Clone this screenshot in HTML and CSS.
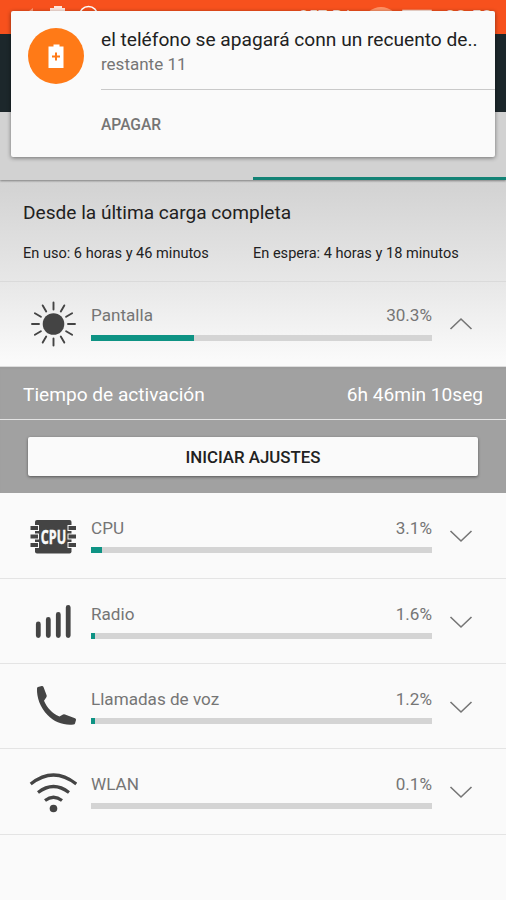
FILE: index.html
```
<!DOCTYPE html>
<html lang="es">
<head>
<meta charset="utf-8">
<title>Batería</title>
<link rel="stylesheet" href="styles.css">
</head>
<body>
<div class="screen">
  <div class="status">
    <svg class="status-icons" width="100" height="34" viewBox="0 0 100 34"><path d="M29 11l4-3v3z" fill="#ff9c78"/><path d="M50 8h4V6h8v2h3v16H50z" fill="#fff" opacity=".85"/><circle cx="88.500" cy="15.500" r="9" fill="none" stroke="#fff" stroke-width="1.500"/></svg>
    <span class="speed">257 B/s</span>
    <svg class="signal" width="64" height="34" viewBox="0 0 64 34"><path d="M0 12Q13 2 26 12L13 27z" fill="#ff9468"/><path d="M35 10.500h28v14H35z" fill="none" stroke="#ffe5db" stroke-width="1.500"/></svg>
    <span class="clock">03:53</span>
  </div>
  <div class="appbar"></div>
  <div class="tabs"><span class="tab"></span><span class="tab active"></span></div>
  <section class="summary">
    <h1><span>Desde la última carga completa</span></h1>
    <div class="times"><span>En uso: 6 horas y 46 minutos</span><span>En espera: 4 horas y 18 minutos</span></div>
  </section>
  <div class="row first">
    <svg class="icon" width="48" height="48" viewBox="0 0 48 48"><circle cx="24.500" cy="24" r="10.800" fill="#444"/><g transform="translate(.5 0)" stroke="#444" stroke-width="1.900" stroke-linecap="round"><path d="M24 2.500v7M24 38.500v7M2.500 24h7M38.500 24h7M13.200 5.400l3.500 6M31.300 36.600l3.500 6M5.400 13.200l6 3.500M36.600 31.300l6 3.500M5.400 34.800l6-3.500M36.600 16.700l6-3.500M13.200 42.600l3.500-6M31.300 11.400l3.500-6"/></g></svg>
    <div class="usage"><div class="label"><span>Pantalla</span><span>30.3%</span></div><div class="bar"><i style="width:30.100%"></i></div></div>
    <svg class="chev" width="24" height="14" viewBox="0 0 24 14"><path d="M1.500 12L12 2l10.500 10"/></svg>
  </div>
  <section class="details">
    <div class="activation"><span>Tiempo de activación</span><span>6h 46min 10seg</span></div>
    <div class="action"><button>INICIAR AJUSTES</button></div>
  </section>
  <div class="row">
    <svg class="icon" width="48" height="48" viewBox="0 0 48 48"><rect x="6" y="7" width="36.500" height="33.500" rx="2" fill="#444"/><path d="M5 15h5M5 23.500h5M5 32h5M38.500 15h5M38.500 23.500h5M38.500 32h5" stroke="#fafafa" stroke-width="6"/><path d="M1.500 15h7.500M1.500 23.500h7.500M1.500 32h7.500M39.500 15h7.500M39.500 23.500h7.500M39.500 32h7.500" stroke="#444" stroke-width="3.800"/><text class="cpu" transform="translate(24.500 30.500) scale(.66 1)" text-anchor="middle">CPU</text></svg>
    <div class="usage"><div class="label"><span>CPU</span><span>3.1%</span></div><div class="bar"><i style="width:3.100%"></i></div></div>
    <svg class="chev" width="24" height="14" viewBox="0 0 24 14"><path d="M1.500 2L12 12 22.500 2"/></svg>
  </div>
  <div class="row">
    <svg class="icon" width="48" height="48" viewBox="0 0 48 48"><path d="M9.300 25v11.500M19.300 20.500v16M29.300 15.500v21M39.200 8.500v28" fill="none" stroke="#444" stroke-width="4.800" stroke-linecap="round"/></svg>
    <div class="usage"><div class="label"><span>Radio</span><span>1.6%</span></div><div class="bar"><i style="width:1.200%"></i></div></div>
    <svg class="chev" width="24" height="14" viewBox="0 0 24 14"><path d="M1.500 2L12 12 22.500 2"/></svg>
  </div>
  <div class="row">
    <svg class="icon" width="48" height="48" viewBox="0 0 48 48"><path d="M9 3L12.700 2q1.300-.2 1.800 1l3.200 8.500q.2 1-.5 2l-2.200 3.200C18 23.500 23 29.500 30.500 32.500l3.500-2q1-.3 2 0L46 34.200q1.300.6 1 1.800l-1 3.500q-.3 1-1.500 1C35 41.500 25.500 38.500 18.500 31 11 23 7.700 13.500 8 4.500q0-1.200 1-1.500z" fill="#444"/></svg>
    <div class="usage"><div class="label"><span>Llamadas de voz</span><span>1.2%</span></div><div class="bar"><i style="width:1.200%"></i></div></div>
    <svg class="chev" width="24" height="14" viewBox="0 0 24 14"><path d="M1.500 2L12 12 22.500 2"/></svg>
  </div>
  <div class="row">
    <svg class="icon" width="48" height="48" viewBox="0 0 48 48"><path d="M1.700 15Q24.500-3 47.300 15M9 23.500Q24.500 11.500 40 23.500M16 31.500q8.500-6.500 17 0" fill="none" stroke="#444" stroke-width="3.200"/><circle cx="24.500" cy="39.500" r="3.800" fill="#444"/></svg>
    <div class="usage"><div class="label"><span>WLAN</span><span>0.1%</span></div><div class="bar"></div></div>
    <svg class="chev" width="24" height="14" viewBox="0 0 24 14"><path d="M1.500 2L12 12 22.500 2"/></svg>
  </div>
  <aside class="notice">
    <svg width="56" height="56" viewBox="0 0 56 56"><circle cx="28" cy="28" r="28" fill="#ff7a17"/><path d="M20.500 18.500h5v-2h6v2h4V40h-15z" fill="#fff"/><path d="M28 24.500v8M24 28.500h8" stroke="#ff7a17" stroke-width="2"/></svg>
    <div class="notice-body">
      <div class="notice-text"><strong>el teléfono se apagará conn un recuento de..</strong><span>restante 11</span></div>
      <div class="shutdown">APAGAR</div>
    </div>
  </aside>
</div>
</body>
</html>
```
FILE: styles.css
```
* { box-sizing: border-box; }
body { margin: 0; font-family: Roboto, sans-serif; background: #fafafa; }
.screen { position: relative; width: 506px; height: 900px; overflow: hidden; background: linear-gradient(#d0d0d0 112px, #d4d4d4 190px, #e7e7e7 281px, #fafafa 360px, #fafafa); }
.status { height: 34px; background: #f7511d; display: flex; color: #ffe5db; }
.speed { margin-left: 199px; width: 69px; font-size: 17px; line-height: 32px; white-space: nowrap; }
.clock { margin-left: 13px; font-size: 19px; line-height: 33px; }
.appbar { height: 78px; background: #1c272b; }
.tabs { height: 68px; display: flex; box-shadow: 0 1px 2px #0006; background: #d2d2d2; }
.tab { width: 50%; }
.active { border-bottom: 3px solid #148376; }
.summary { height: 101px; padding: 21px 23px 0; color: #212121; }
h1 { margin: 0; font-size: 19.100px; font-weight: 400; line-height: 24px; }
.times { display: flex; margin-top: 19px; font-size: 14.550px; line-height: 20px; white-space: nowrap; }
.times span { width: 230px; flex: none; }
.row { height: 85.400px; display: flex; align-items: flex-start; border-bottom: 1px solid #e4e4e4; }
.first { height: 86px; border-top: 1px solid #dadada; border-bottom: 1px solid #ddd; }
.icon { margin: 20px 0 0 29px; flex: none; }
.first .icon { margin-top: 18px; }
.usage { width: 341px; margin: 25px 0 0 14px; }
.first .usage { margin-top: 23px; }
.first .bar { margin-top: 10px; }
.label { display: flex; justify-content: space-between; font-size: 17.100px; line-height: 20px; color: #757575; }
.bar { height: 6px; margin-top: 9px; background: #d4d4d4; }
.bar i { display: block; height: 100%; background: #0e9384; }
.chev { margin: 36px 0 0 17px; fill: none; stroke: #757575; stroke-width: 1.600; }
.first .chev { margin-top: 35px; }
.cpu { font: 700 19px "Open Sans", sans-serif; fill: #fafafa; stroke: #fafafa; stroke-width: .5; }
.details { height: 126.300px; background: #a1a1a1; box-shadow: inset 0 2px 1px #9997; }
.activation { height: 53px; padding: 2px 23px 0; display: flex; align-items: center; justify-content: space-between; border-bottom: 1px solid #e3e3e3; font-size: 19.100px; color: #fff; }
.action { padding: 17px 28px; }
button { width: 100%; height: 39px; padding: 0; border: 0; border-radius: 2px; background: #fafafa; color: #212121; font: 500 16.850px Roboto, sans-serif; box-shadow: 0 1px 3px #0007; }
.notice { position: absolute; left: 11px; top: 11px; width: 484px; height: 146px; display: flex; padding: 17px 0 0 17px; border-radius: 2px; background: #fafafa; box-shadow: 0 1px 4px #0007; }
.notice svg { flex: none; }
.notice-body { flex: 1; margin: -17px 0 0 17px; white-space: nowrap; }
.notice-text { height: 79px; padding-top: 17px; border-bottom: 1px solid #c9c9c9; }
.notice-text strong { display: block; font-size: 19.150px; line-height: 24px; font-weight: 400; color: #212121; }
.notice-text span { display: block; font-size: 17px; line-height: 24px; color: #757575; }
.shutdown { margin-top: 25px; font-size: 15.600px; line-height: 20px; font-weight: 500; color: #757575; }
```
